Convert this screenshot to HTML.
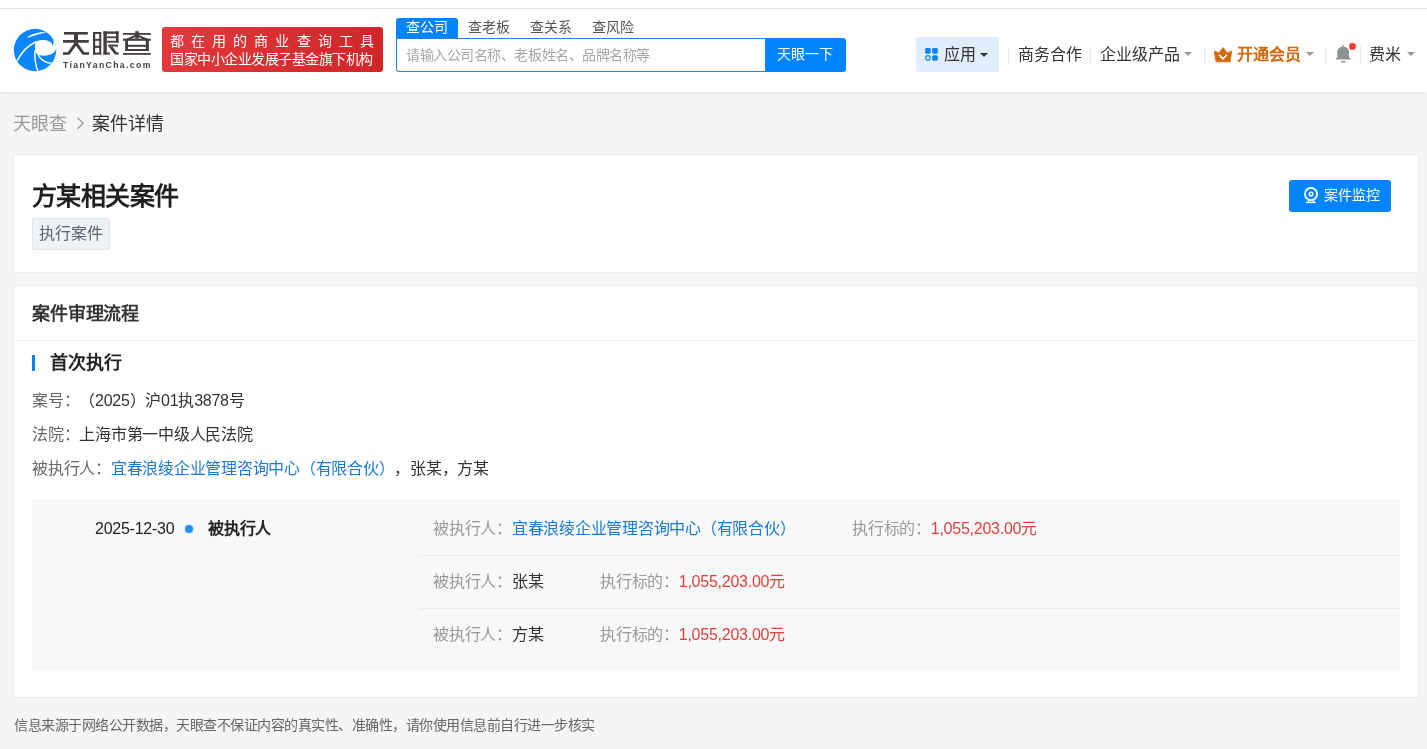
<!DOCTYPE html>
<html lang="zh-CN"><head><meta charset="utf-8">
<style>
*{margin:0;padding:0;box-sizing:border-box}
body{will-change:transform}html,body{text-spacing-trim:space-all;width:1427px;height:749px;overflow:hidden;background:#f5f5f5;font-family:"Liberation Sans",sans-serif;color:#333}
.a{position:absolute;white-space:nowrap}
#topbar{position:absolute;left:0;top:0;width:1427px;height:8px;background:#fff}
#topline{position:absolute;left:0;top:8px;width:1427px;height:1px;background:#e6e6e6}
#header{position:absolute;left:0;top:9px;width:1427px;height:83px;background:#fff;box-shadow:0 1px 5px rgba(0,0,0,0.07)}
.sep{position:absolute;width:1px;background:#e8e8e8}
.caret{position:absolute;width:0;height:0;border-left:4px solid transparent;border-right:4px solid transparent;border-top:4px solid #999}
.card{position:absolute;background:#fff;border:1px solid #ececec}
</style></head><body>
<div id="topbar"></div><div id="topline"></div>
<div id="header">
</div>

<!-- logo -->
<svg class="a" style="left:12px;top:27px" width="46" height="46" viewBox="0 0 749 749">
<defs><clipPath id="cc"><circle cx="375" cy="375" r="345"/></clipPath></defs>
<circle cx="375" cy="375" r="345" fill="#0a85fa"/>
<g clip-path="url(#cc)" fill="#fff" stroke="#fff">
<path stroke="none" d="M385,238 C450,205 560,198 625,245 C650,265 662,292 655,318 C692,270 692,170 566,84 L800,-10 L800,352 L722,352 C700,440 570,495 430,455 C392,440 372,400 374,330 C376,280 380,252 385,238 Z"/>
<path fill="none" stroke-width="24" d="M392,240 C260,300 150,420 85,548"/>
<path fill="none" stroke-width="24" d="M374,380 C366,500 382,620 422,725"/>
<path fill="none" stroke-width="24" d="M424,452 C470,540 560,588 655,596"/>
<path stroke="none" d="M250,162 C350,105 450,76 570,82 C470,108 370,138 264,176 Z"/>
</g>
</svg>
<svg class="a" style="left:60px;top:28px" width="96" height="30" viewBox="0 0 2400 750"><g fill="#433d3d">
<rect x="100" y="100" width="595" height="65"/><rect x="75" y="300" width="645" height="68"/><rect x="350" y="100" width="100" height="268"/>
<polygon points="360,368 455,368 235,670 75,670 75,605 195,605"/><polygon points="440,368 345,368 565,670 725,670 725,605 605,605"/>
<rect x="825" y="100" width="55" height="565"/><rect x="980" y="100" width="50" height="565"/><rect x="825" y="100" width="205" height="50"/><rect x="825" y="272" width="205" height="48"/><rect x="825" y="442" width="205" height="55"/><rect x="825" y="615" width="205" height="50"/>
<rect x="1085" y="85" width="85" height="580"/><rect x="1085" y="85" width="380" height="60"/><rect x="1400" y="85" width="65" height="280"/><rect x="1170" y="210" width="230" height="45"/><rect x="1170" y="320" width="295" height="45"/><rect x="1085" y="610" width="160" height="55"/>
<rect x="1205" y="415" width="245" height="50"/><polygon points="1215,465 1310,465 1420,615 1470,615 1470,665 1370,665"/>
<rect x="1575" y="125" width="695" height="45"/><rect x="1880" y="80" width="90" height="185"/>
<path d="M1925,180 L1660,300 M1925,180 L2190,300" stroke="#433d3d" stroke-width="50"/>
<rect x="1575" y="265" width="695" height="55"/><rect x="1630" y="300" width="70" height="275" rx="0"/><rect x="2145" y="300" width="75" height="275"/>
<rect x="1630" y="420" width="590" height="50"/><rect x="1630" y="525" width="590" height="50"/>
<rect x="1575" y="625" width="695" height="45"/>
</g></svg>
<div class="a" style="left:63px;top:58.5px;font-size:8.6px;line-height:12px;color:#433d3d;font-weight:bold;letter-spacing:1.4px">TianYanCha.com</div>

<!-- red banner -->
<div class="a" style="left:162px;top:27px;width:221px;height:45px;border-radius:3px;background:linear-gradient(100deg,#e2393d,#d0262a)"></div>
<div class="a" style="left:170px;top:32px;font-size:14px;font-weight:500;line-height:18px;color:#fff;letter-spacing:7.1px">都在用的商业查询工具</div>
<div class="a" style="left:170px;top:50px;font-size:14px;font-weight:500;letter-spacing:-0.5px;line-height:18px;color:#fff">国家中小企业发展子基金旗下机构</div>

<!-- search -->
<div class="a" style="left:396px;top:18px;width:62px;height:21px;background:#0084ff;border-radius:3px 3px 0 0"></div>
<div class="a" style="left:406px;top:17px;font-size:14px;line-height:20px;color:#fff">查公司</div>
<div class="a" style="left:468px;top:17px;font-size:14px;line-height:20px;color:#555">查老板</div>
<div class="a" style="left:530px;top:17px;font-size:14px;line-height:20px;color:#555">查关系</div>
<div class="a" style="left:592px;top:17px;font-size:14px;line-height:20px;color:#555">查风险</div>
<div class="a" style="left:396px;top:38px;width:370px;height:34px;border:1px solid #2a7fd6;border-right:none;border-radius:0 0 0 3px;background:#fff"></div>
<div class="a" style="left:406px;top:45px;font-size:14px;letter-spacing:-0.45px;line-height:20px;color:#a6a6a6">请输入公司名称、老板姓名、品牌名称等</div>
<div class="a" style="left:765px;top:38px;width:81px;height:34px;background:#0084ff;border-radius:0 3px 3px 0"></div>
<div class="a" style="left:777px;top:44px;font-size:14px;line-height:20px;color:#fff">天眼一下</div>

<!-- nav -->
<div class="a" style="left:916px;top:37px;width:83px;height:35px;border-radius:3px;background:#dfedfc"></div>
<svg class="a" style="left:920px;top:42px" width="24" height="24" viewBox="0 0 749 749">
<rect x="160" y="190" width="175" height="175" rx="45" fill="#0a84f5"/>
<rect x="380" y="190" width="175" height="175" rx="45" fill="#0a84f5"/>
<rect x="380" y="410" width="175" height="175" rx="45" fill="#0a84f5"/>
<circle cx="247" cy="497" r="70" fill="none" stroke="#0a84f5" stroke-width="35"/>
</svg>
<div class="a" style="left:944px;top:44px;font-size:16px;line-height:22px;color:#333">应用</div>
<div class="caret" style="left:980px;top:53px;border-top-color:#333"></div>
<div class="sep" style="left:1008px;top:47px;height:18px"></div>
<div class="a" style="left:1018px;top:44px;font-size:16px;line-height:22px;color:#333">商务合作</div>
<div class="sep" style="left:1090px;top:47px;height:18px"></div>
<div class="a" style="left:1100px;top:44px;font-size:16px;line-height:22px;color:#333">企业级产品</div>
<div class="caret" style="left:1184px;top:52px"></div>
<div class="sep" style="left:1204px;top:47px;height:18px"></div>
<svg class="a" style="left:1208px;top:40px" width="30" height="28" viewBox="0 0 802 749">
<path d="M165,295 L290,345 L400,200 L515,345 L635,295 L590,585 L215,585 Z" fill="#d2680c" stroke="#d2680c" stroke-width="20" stroke-linejoin="round"/>
<path d="M295,395 L400,505 L505,395" fill="none" stroke="#fff" stroke-width="42"/>
</svg>
<div class="a" style="left:1237px;top:44px;font-size:16px;line-height:22px;color:#d2680c;font-weight:bold">开通会员</div>
<div class="caret" style="left:1306px;top:52px"></div>
<div class="sep" style="left:1325px;top:47px;height:18px"></div>
<svg class="a" style="left:1330px;top:38px" width="32" height="30" viewBox="0 0 799 749">
<rect x="315" y="175" width="30" height="60" fill="#8e9196"/>
<path d="M180,505 L180,360 C180,270 250,220 330,220 C410,220 475,270 475,360 L475,505 Z" fill="#8e9196"/>
<rect x="145" y="500" width="375" height="35" rx="12" fill="#8e9196"/>
<rect x="275" y="575" width="115" height="35" fill="#8e9196"/>
<circle cx="560" cy="210" r="85" fill="#f5392d"/>
</svg>
<div class="sep" style="left:1360px;top:46px;height:18px"></div>
<div class="a" style="left:1369px;top:44px;font-size:16px;line-height:22px;color:#333">费米</div>
<div class="caret" style="left:1407px;top:52px"></div>

<!-- breadcrumb -->
<div class="a" style="left:13px;top:112px;font-size:18px;line-height:24px;color:#999">天眼查</div>
<svg class="a" style="left:75px;top:116px" width="12" height="14" viewBox="0 0 12 14"><path d="M2.5,1.8 L8.3,7.3 L2.5,12.8" fill="none" stroke="#999" stroke-width="1.3"/></svg>
<div class="a" style="left:92px;top:112px;font-size:18px;line-height:24px;color:#333">案件详情</div>

<!-- card 1 -->
<div class="card" style="left:13px;top:154px;width:1406px;height:119px"></div>
<div class="a" style="left:32px;top:180px;font-size:25px;letter-spacing:-0.6px;line-height:32px;color:#1f1f1f;font-weight:bold">方某相关案件</div>
<div class="a" style="left:32px;top:218px;width:78px;height:32px;background:#eef1f6;border:1px solid #e1e5eb;border-radius:2px"></div>
<div class="a" style="left:39px;top:223px;font-size:16px;line-height:22px;color:#5f6570">执行案件</div>
<div class="a" style="left:1289px;top:180px;width:102px;height:32px;background:#0084ff;border-radius:3px"></div>
<svg class="a" style="left:1298px;top:182px" width="26" height="26" viewBox="0 0 749 749">
<circle cx="375" cy="345" r="175" fill="none" stroke="#fff" stroke-width="50"/>
<circle cx="375" cy="345" r="52" fill="none" stroke="#fff" stroke-width="42"/>
<path d="M310,500 L300,575 M440,500 L450,575" stroke="#fff" stroke-width="40"/>
<rect x="225" y="568" width="295" height="42" fill="#fff"/>
</svg>
<div class="a" style="left:1324px;top:184px;font-size:14px;line-height:22px;color:#fff">案件监控</div>

<!-- card 2 -->
<div class="card" style="left:13px;top:285px;width:1406px;height:413px"></div>
<div class="a" style="left:32px;top:302px;font-size:18px;letter-spacing:-0.15px;line-height:24px;color:#333;font-weight:bold">案件审理流程</div>
<div class="a" style="left:14px;top:340px;width:1404px;height:1px;background:#f0f0f0"></div>
<div class="a" style="left:32px;top:355px;width:3px;height:16px;background:#0a7fe6"></div>
<div class="a" style="left:50px;top:351px;font-size:18px;letter-spacing:-0.1px;line-height:24px;color:#222;font-weight:bold">首次执行</div>
<div class="a" style="left:32px;top:390px;font-size:16px;letter-spacing:-0.25px;line-height:22px;color:#666">案号：<span style="color:#333">（2025）沪01执3878号</span></div>
<div class="a" style="left:32px;top:424px;font-size:16px;letter-spacing:-0.25px;line-height:22px;color:#666">法院：<span style="color:#333">上海市第一中级人民法院</span></div>
<div class="a" style="left:32px;top:458px;font-size:16px;letter-spacing:-0.25px;line-height:22px;color:#666">被执行人：<span style="color:#1b7ad6">宜春浪绫企业管理咨询中心（有限合伙）</span><span style="color:#333">，张某，方某</span></div>

<div class="a" style="left:32px;top:499px;width:1368px;height:171px;background:#f7f8fa"></div>
<div class="a" style="left:95px;top:518px;font-size:16px;letter-spacing:-0.25px;line-height:22px;color:#222">2025-12-30</div>
<div class="a" style="left:183px;top:523px;width:12px;height:12px;border-radius:50%;background:#e3effc"></div>
<div class="a" style="left:185px;top:525px;width:8px;height:8px;border-radius:50%;background:#2290f8"></div>
<div class="a" style="left:208px;top:518px;font-size:16px;letter-spacing:-0.25px;line-height:22px;color:#222;font-weight:bold">被执行人</div>

<div class="a" style="left:433px;top:518px;font-size:16px;letter-spacing:-0.25px;line-height:22px;color:#999">被执行人：<span style="color:#1b7ad6">宜春浪绫企业管理咨询中心（有限合伙）</span></div>
<div class="a" style="left:852px;top:518px;font-size:16px;letter-spacing:-0.25px;line-height:22px;color:#999">执行标的：<span style="color:#e0413a">1,055,203.00元</span></div>
<div class="a" style="left:420px;top:555px;width:980px;height:1px;background:#ebebeb"></div>
<div class="a" style="left:433px;top:571px;font-size:16px;letter-spacing:-0.25px;line-height:22px;color:#999">被执行人：<span style="color:#333">张某</span></div>
<div class="a" style="left:600px;top:571px;font-size:16px;letter-spacing:-0.25px;line-height:22px;color:#999">执行标的：<span style="color:#e0413a">1,055,203.00元</span></div>
<div class="a" style="left:420px;top:608px;width:980px;height:1px;background:#ebebeb"></div>
<div class="a" style="left:433px;top:624px;font-size:16px;letter-spacing:-0.25px;line-height:22px;color:#999">被执行人：<span style="color:#333">方某</span></div>
<div class="a" style="left:600px;top:624px;font-size:16px;letter-spacing:-0.25px;line-height:22px;color:#999">执行标的：<span style="color:#e0413a">1,055,203.00元</span></div>

<!-- footer -->
<div class="a" style="left:14px;top:715px;font-size:14px;letter-spacing:-0.5px;line-height:20px;color:#666">信息来源于网络公开数据，天眼查不保证内容的真实性、准确性，请你使用信息前自行进一步核实</div>
</body></html>
